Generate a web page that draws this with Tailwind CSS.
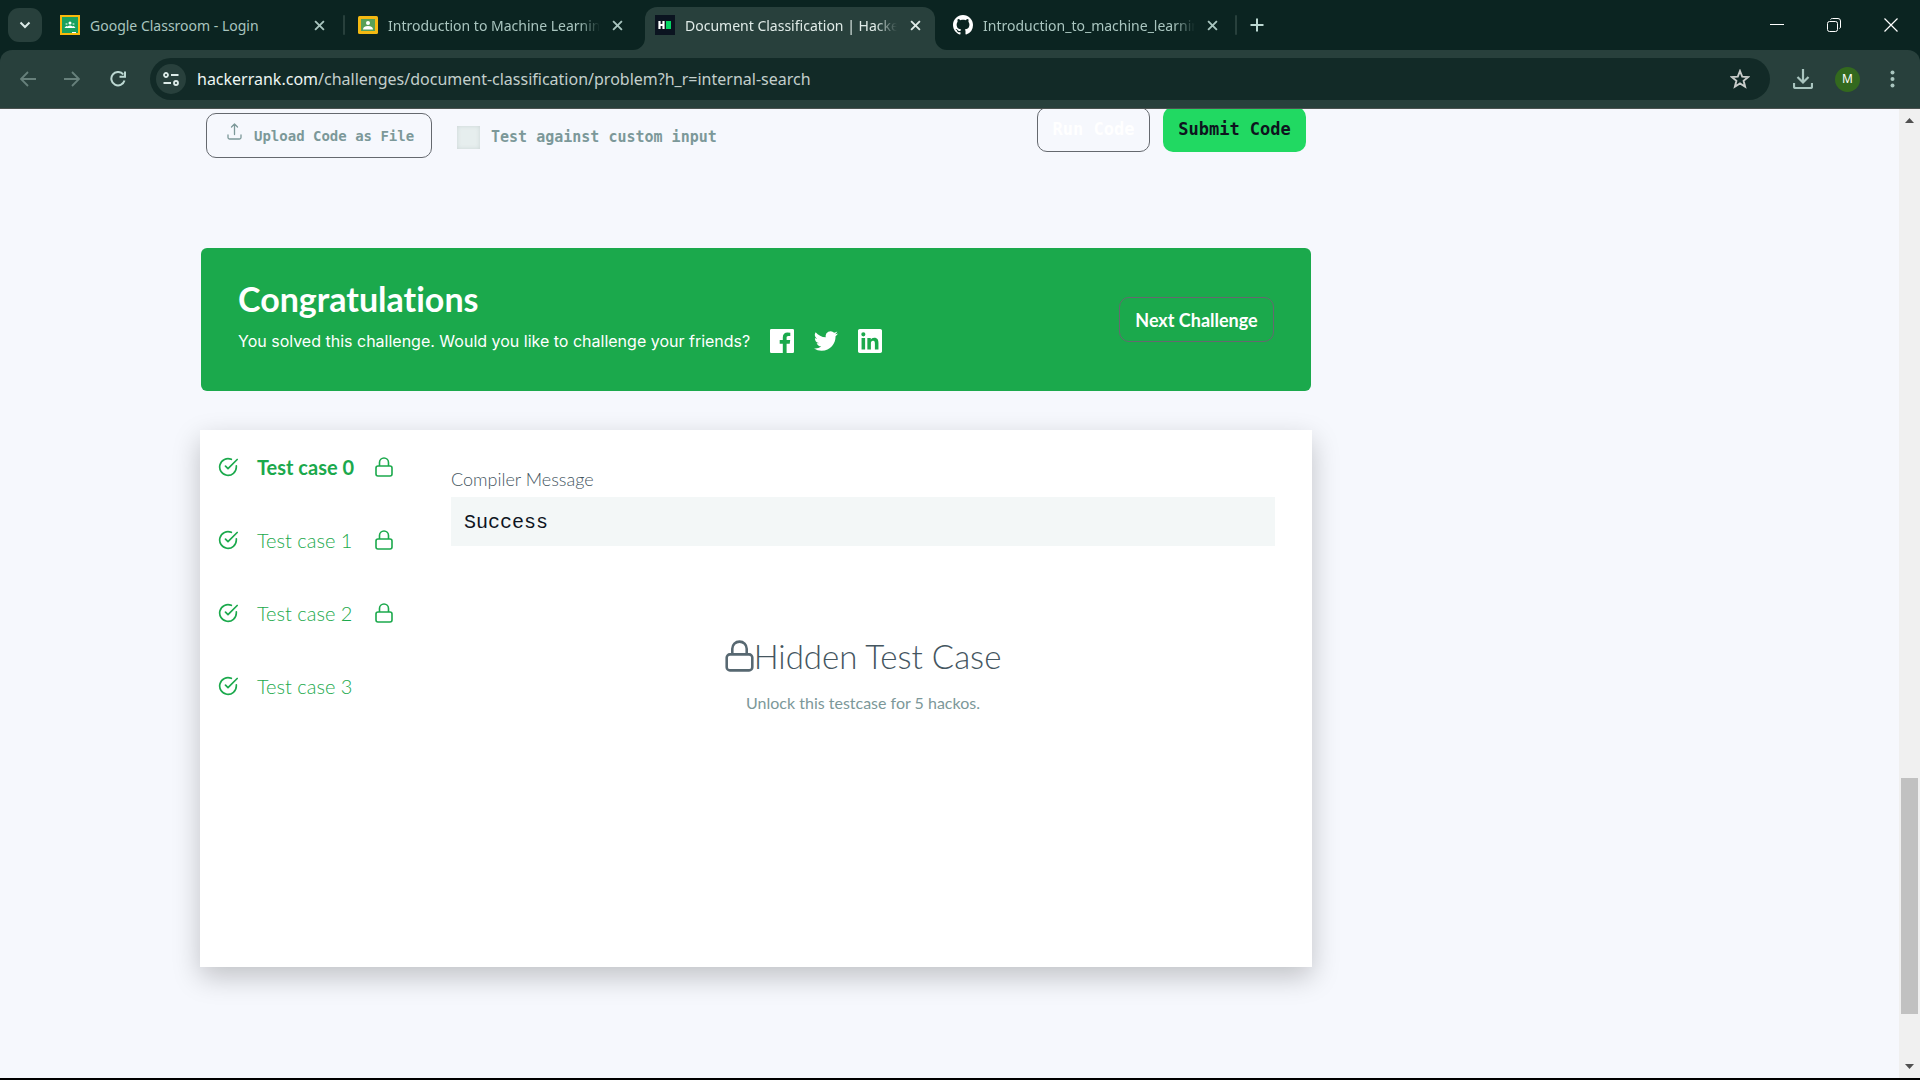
<!DOCTYPE html>
<html lang="en">
<head>
<meta charset="utf-8">
<title>Document Classification | HackerRank</title>
<script src="https://cdn.jsdelivr.net/npm/@tailwindcss/browser@4"></script>
</head>
<body class="flex min-h-screen flex-col overflow-hidden border-b-2 border-black bg-[#f6f8fd] font-['Lato',sans-serif]">
<svg class="hidden" aria-hidden="true">
  <symbol id="x" viewBox="0 0 10 10"><path d="M1 1l8 8M9 1l-8 8" stroke="currentColor" stroke-width="1.7" fill="none"/></symbol>
  <symbol id="check" viewBox="0 0 24 24"><path d="M22 10.500v1.500a10 10 0 1 1-6-9.200M23 3L12 14l-3-3" stroke="currentColor" stroke-width="2" stroke-linecap="round" stroke-linejoin="round" fill="none"/></symbol>
  <symbol id="lock" viewBox="0 0 18 20"><rect x="1" y="9" width="16" height="10" rx="2" stroke="currentColor" stroke-width="1.600" fill="none"/><path d="M4.500 9V5.500a4.500 4.500 0 0 1 9 0V9" stroke="currentColor" stroke-width="1.600" fill="none"/></symbol>
</svg>

<header class="bg-[#0b2421] font-['Noto_Sans',sans-serif] text-[#a9c5bf]">
  <div class="flex h-[50px] items-end">
    <button aria-label="Search tabs" class="mb-2 ml-2 flex h-[34px] w-[34px] items-center justify-center rounded-[11px] bg-[#28403c] text-[#dcebe8]">
      <svg width="12" height="8" viewBox="0 0 12 8"><path d="M1.500 1.500L6 6l4.500-4.500" fill="none" stroke="currentColor" stroke-width="2"/></svg>
    </button>
    <nav class="ml-2 flex h-[43px] min-w-0" aria-label="Tabs">
      <div class="flex h-9 w-[298px] items-center pr-[23px] pl-[10px]">
        <svg class="shrink-0" width="20" height="20" viewBox="0 0 20 20"><rect width="20" height="20" fill="#f9b90b"/><rect x="2" y="2" width="16" height="16" fill="#1aa15f"/><circle cx="10" cy="8" r="1.500" fill="#fff"/><circle cx="6.500" cy="9" r="1.100" fill="#9bd8b9"/><circle cx="13.500" cy="9" r="1.100" fill="#9bd8b9"/><path d="M4.500 13q2-3 3-1.500 2.500-2 5 0 1-1.500 3 1.500z" fill="#fff"/><path d="M12 17h4v1h-4z" fill="#fff"/></svg>
        <a href="#" class="ml-[10px] w-[212px] overflow-hidden pt-px whitespace-nowrap text-sm">Google Classroom - Login</a>
        <button aria-label="Close tab" class="ml-auto shrink-0"><svg width="11" height="11"><use href="#x"/></svg></button>
      </div>
      <div class="relative flex h-9 w-[297px] items-center pr-[22px] pl-[10px]">
        <span class="absolute top-2 -left-[5px] h-5 w-[2px] rounded bg-[#28403c]"></span>
        <svg class="shrink-0" width="20" height="20" viewBox="0 0 20 20"><rect y="1" width="20" height="18" rx="1.500" fill="#f4b912"/><rect x="3" y="4" width="14" height="12" fill="#58a058"/><circle cx="10" cy="8" r="2" fill="#fff"/><path d="M5 14.500q0-3.500 5-3.500t5 3.500z" fill="#fff"/></svg>
        <a href="#" class="ml-[10px] w-[212px] overflow-hidden pt-px whitespace-nowrap text-sm [mask-image:linear-gradient(to_right,black_90%,transparent_100%)]">Introduction to Machine Learning</a>
        <button aria-label="Close tab" class="ml-auto shrink-0"><svg width="11" height="11"><use href="#x"/></svg></button>
      </div>
      <div class="relative flex w-[290px] items-start rounded-t-xl bg-[#28403c] pr-[14px] pl-[10px] text-[#dfeae7]">
        <svg class="absolute bottom-0 -left-3" width="12" height="12"><path d="M12 0v12H0A12 12 0 0 0 12 0" fill="#28403c"/></svg>
        <svg class="absolute -right-3 bottom-0" width="12" height="12"><path d="M0 0v12h12A12 12 0 0 1 0 0" fill="#28403c"/></svg>
        <div class="flex h-9 w-full items-center">
          <svg class="shrink-0" width="20" height="20" viewBox="0 0 20 20"><rect width="20" height="20" fill="#0b1420"/><path d="M4.500 6v8M8.500 6v8M4 10h5" stroke="#fff" stroke-width="2.200"/><rect x="11" y="6" width="5" height="8" fill="#05d463"/></svg>
          <a href="#" class="ml-[10px] w-[212px] overflow-hidden pt-px whitespace-nowrap text-sm [mask-image:linear-gradient(to_right,black_90%,transparent_100%)]">Document Classification | HackerRank</a>
          <button aria-label="Close tab" class="ml-auto shrink-0"><svg width="11" height="11"><use href="#x"/></svg></button>
        </div>
      </div>
      <div class="ml-2 flex h-9 w-[297px] items-center pr-[22px] pl-[10px]">
        <svg class="shrink-0" width="20" height="20" viewBox="0 0 16 16" fill="#fff"><path d="M8 0C3.580 0 0 3.580 0 8c0 3.540 2.290 6.530 5.470 7.590.4.070.55-.17.55-.38 0-.19-.01-.82-.01-1.490-2.010.37-2.530-.49-2.690-.94-.09-.23-.48-.94-.82-1.130-.28-.15-.68-.52-.01-.53.630-.01 1.080.58 1.230.82.720 1.210 1.870.87 2.330.66.070-.52.280-.87.510-1.070-1.780-.2-3.640-.89-3.640-3.950 0-.87.310-1.590.82-2.150-.08-.2-.36-1.020.08-2.120 0 0 .67-.21 2.200.82.640-.18 1.320-.27 2-.27s1.360.09 2 .27c1.530-1.040 2.200-.82 2.200-.82.440 1.100.16 1.920.08 2.120.510.560.82 1.270.82 2.150 0 3.070-1.870 3.750-3.650 3.950.29.25.54.73.54 1.480 0 1.070-.01 1.930-.01 2.200 0 .21.15.46.55.38A8.010 8.010 0 0 0 16 8c0-4.420-3.580-8-8-8z"/></svg>
        <a href="#" class="ml-[10px] w-[212px] overflow-hidden pt-px whitespace-nowrap text-sm [mask-image:linear-gradient(to_right,black_90%,transparent_100%)]">Introduction_to_machine_learning</a>
        <button aria-label="Close tab" class="ml-auto shrink-0"><svg width="11" height="11"><use href="#x"/></svg></button>
      </div>
    </nav>
    <div class="mb-[15px] -ml-[5px] h-5 w-[2px] shrink-0 rounded bg-[#28403c]"></div>
    <button aria-label="New tab" class="mb-[18px] ml-[13px] text-[#bcd8d2]"><svg width="14" height="14" viewBox="0 0 14 14"><path d="M7 0.500v13M0.500 7h13" stroke="currentColor" stroke-width="2"/></svg></button>
    <div class="mr-[22px] mb-[18px] ml-auto flex items-center gap-[43px] text-white">
      <button aria-label="Minimize"><svg width="14" height="14"><path d="M0 6.500h14" stroke="currentColor"/></svg></button>
      <button aria-label="Restore"><svg width="14" height="14" viewBox="0 0 14 14" fill="none" stroke="currentColor"><rect x="0.500" y="3.500" width="10" height="10" rx="2"/><path d="M3.500 1.500Q4 .5 5.500.5H11A2.500 2.500 0 0 1 13.500 3v6q0 1-1 1.500"/></svg></button>
      <button aria-label="Close"><svg width="14" height="14" viewBox="0 0 14 14"><path d="M.5.5l13 13M13.500.5l-13 13" stroke="currentColor" stroke-width="1.200"/></svg></button>
    </div>
  </div>
  <div class="flex h-[59px] items-center rounded-t-xl border-b border-[#4b5250] bg-[#28403c] pr-[25px] pl-5">
    <button aria-label="Back" class="text-[#67807b]"><svg width="16" height="16" viewBox="0 0 16 16" fill="none" stroke="currentColor" stroke-width="1.800"><path d="M16 8H1.500M8 1L1 8l7 7"/></svg></button>
    <button aria-label="Forward" class="ml-7 text-[#67807b]"><svg width="16" height="16" viewBox="0 0 16 16" fill="none" stroke="currentColor" stroke-width="1.800"><path d="M0 8h14.500M8 1l7 7-7 7"/></svg></button>
    <button aria-label="Reload" class="ml-[30px] text-[#bcd8d2]"><svg width="16" height="16" viewBox="0 0 16 16" fill="none" stroke="currentColor" stroke-width="2"><path d="M14.500 9.500A6.700 6.700 0 1 1 13.300 3.500M15 .5v5.300H9.500"/></svg></button>
    <div class="ml-6 flex h-[42px] min-w-0 flex-1 items-center rounded-full bg-[#122a27] pr-5 pl-[6px]">
      <button aria-label="View site information" class="flex h-[30px] w-[30px] shrink-0 items-center justify-center rounded-full bg-[#28403c] text-[#dcebe8]"><svg width="16" height="14" viewBox="0 0 16 14" fill="none" stroke="currentColor" stroke-width="1.800"><circle cx="3" cy="3" r="2"/><path d="M8 3h7.500M.5 11H8"/><circle cx="13" cy="11" r="2"/></svg></button>
      <input aria-label="Address" class="sr-only" value="hackerrank.com/challenges/document-classification/problem?h_r=internal-search">
      <div class="ml-[11px] flex-1 truncate text-base text-[#c3cfcc]"><span class="text-[#edf6f3]">hackerrank.com</span>/challenges/document-classification/problem?h_r=internal-search</div>
      <button aria-label="Bookmark this tab" class="text-[#c8ccca]"><svg width="20" height="20" viewBox="0 0 20 20"><path d="M10 2l2.200 5.600 6 .4-4.600 3.800 1.500 5.900L10 14.400l-5.100 3.300 1.500-5.900L1.800 8l6-.4z" fill="none" stroke="currentColor" stroke-width="1.900"/></svg></button>
    </div>
    <button aria-label="Downloads" class="ml-[23px] text-[#a9c5bf]"><svg width="20" height="20" viewBox="0 0 20 20" fill="none" stroke="currentColor" stroke-width="2.200"><path d="M10 0v13M4.500 8l5.500 5.500L15.500 8M1 14v3.500q0 1.500 1.500 1.500h15q1.500 0 1.500-1.500V14"/></svg></button>
    <button aria-label="Profile" class="ml-[22px] h-[25px] w-[25px] rounded-full bg-[#33691e] text-xs text-white">M</button>
    <button aria-label="Menu" class="ml-[30px] text-[#a9c5bf]"><svg width="5" height="18" fill="currentColor"><circle cx="2.500" cy="2.500" r="2"/><circle cx="2.500" cy="9" r="2"/><circle cx="2.500" cy="15.500" r="2"/></svg></button>
  </div>
</header>

<div class="flex flex-1">
  <main class="min-w-0 flex-1 overflow-hidden pl-[200px]">
    <div class="w-full max-w-[1112px]">
      <section class="-mt-0.5 flex items-start justify-between px-[6px] font-['DejaVu_Sans_Mono',monospace] font-bold">
        <div class="mt-[6px] flex items-center">
          <button class="flex h-[45px] w-[226px] items-center gap-3 rounded-[10px] border border-[#65696f] pl-5 text-sm whitespace-nowrap text-[#7c9899]">
            <svg class="mb-2" width="15" height="17" viewBox="0 0 15 17" fill="none" stroke="currentColor" stroke-width="1.300" stroke-linecap="round" stroke-linejoin="round"><path d="M7.500 11.500V1M4.500 4l3-3 3 3M1 12v2.500q0 1.500 1.500 1.500h10q1.500 0 1.500-1.500V12"/></svg>
            Upload Code as File</button>
          <div class="flex items-center pt-1">
            <input type="checkbox" id="custom" class="ml-[25px] h-[23px] w-[23px] appearance-none bg-[#e6eeee] shadow-[inset_0_0_4px_#cbd5d5]">
            <label for="custom" class="ml-[11px] text-[15px] text-[#7c9899]">Test against custom input</label>
          </div>
        </div>
        <div class="flex gap-[13px] text-[17px]">
          <button class="h-[45px] w-[113px] rounded-[10px] border border-[#65696f] text-white">Run Code</button>
          <button class="h-[45px] w-[143px] rounded-[10px] bg-[#21d962] text-[#0e141e]">Submit Code</button>
        </div>
      </section>

      <section class="mx-px mt-[90px] flex h-[143px] items-center justify-between rounded-md bg-[#1ba94c] px-[37px] text-white">
        <div class="pb-2">
          <h1 class="text-[34px] leading-10 font-bold [font-variant-ligatures:none]">Congratulations</h1>
          <div class="mt-[10px] flex items-center">
            <p class="w-[516px] font-['Inter',sans-serif] text-base whitespace-nowrap">You solved this challenge. Would you like to challenge your friends?</p>
            <div class="ml-4 flex items-center gap-5">
              <a href="#" aria-label="Share on Facebook"><svg width="24" height="24" viewBox="0 0 24 24" fill="currentColor"><path d="M1.300 0h21.400Q24 0 24 1.300v21.400q0 1.300-1.300 1.300h-6.100v-9.300h3.100l.5-3.600h-3.600V8.800c0-1 .3-1.800 1.800-1.800h1.900V3.700q-1-.1-2.800-.1c-2.800 0-4.700 1.700-4.700 4.800v2.700H9.700v3.600h3.100V24H1.300Q0 24 0 22.700V1.300Q0 0 1.300 0z"/></svg></a>
              <a href="#" aria-label="Share on Twitter"><svg width="24" height="24" viewBox="0 0 24 24" fill="currentColor"><path d="M23.950 4.570a10 10 0 0 1-2.820.77 4.960 4.960 0 0 0 2.160-2.720c-.95.550-2 .950-3.130 1.180a4.920 4.920 0 0 0-8.380 4.480C7.690 8.100 4.070 6.130 1.640 3.160a4.920 4.920 0 0 0 1.520 6.570 4.900 4.900 0 0 1-2.230-.61v.06a4.920 4.920 0 0 0 3.950 4.830 5 5 0 0 1-2.210.08 4.940 4.940 0 0 0 4.600 3.420A9.870 9.870 0 0 1 0 19.540a14 14 0 0 0 7.550 2.210c9.050 0 14-7.500 14-13.980 0-.21 0-.42-.02-.63a9.940 9.940 0 0 0 2.460-2.550z"/></svg></a>
              <a href="#" aria-label="Share on LinkedIn"><svg width="24" height="24" viewBox="0 0 24 24" fill="currentColor"><path d="M20.450 20.450h-3.560v-5.570c0-1.330-.02-3.040-1.850-3.040-1.850 0-2.140 1.450-2.140 2.940v5.670H9.350V9h3.410v1.560h.05c.48-.9 1.640-1.850 3.370-1.850 3.600 0 4.270 2.370 4.270 5.460zM5.340 7.430a2.060 2.060 0 1 1 0-4.130 2.060 2.060 0 0 1 0 4.130zm1.780 13.020H3.560V9h3.560zM22.220 0H1.770C.79 0 0 .77 0 1.730v20.540C0 23.230.79 24 1.770 24h20.450c.98 0 1.780-.77 1.780-1.730V1.730C24 .77 23.200 0 22.220 0z"/></svg></a>
            </div>
          </div>
        </div>
        <button class="h-[45px] w-[155px] rounded-[10px] border border-[#65696f] text-lg font-bold">Next Challenge</button>
      </section>

      <section class="mt-[39px] flex min-h-[537px] bg-white shadow-[0_10px_26px_rgba(0,0,0,0.22)]">
        <ul class="w-[251px] shrink-0 pl-[18px] text-xl font-light text-[#1ba94c]">
          <li class="flex h-[73px] items-center"><svg width="20" height="20"><use href="#check"/></svg><button class="ml-[19px] w-[108px] text-left font-bold">Test case 0</button><svg class="ml-[10px]" width="18" height="20"><use href="#lock"/></svg></li>
          <li class="flex h-[73px] items-center"><svg width="20" height="20"><use href="#check"/></svg><button class="ml-[19px] w-[108px] text-left">Test case 1</button><svg class="ml-[10px]" width="18" height="20"><use href="#lock"/></svg></li>
          <li class="flex h-[73px] items-center"><svg width="20" height="20"><use href="#check"/></svg><button class="ml-[19px] w-[108px] text-left">Test case 2</button><svg class="ml-[10px]" width="18" height="20"><use href="#lock"/></svg></li>
          <li class="flex h-[73px] items-center"><svg width="20" height="20"><use href="#check"/></svg><button class="ml-[19px] w-[108px] text-left">Test case 3</button></li>
        </ul>
        <div class="min-w-0 flex-1 pt-[35px] pr-[37px]">
          <h2 class="text-lg leading-7 font-light text-[#45565f]">Compiler Message</h2>
          <pre class="mt-1 h-[49px] bg-[#f3f7f7] px-[13px] font-['Liberation_Mono',monospace] text-xl leading-[52px] text-[#0e141e]">Success</pre>
          <div class="mt-[86px] flex items-center justify-center text-[#576871]">
            <svg width="29" height="32" viewBox="0 0 18 20"><use href="#lock"/></svg>
            <h3 class="text-[33px] leading-[48px] font-light text-[#45565f]">Hidden Test Case</h3>
          </div>
          <p class="mt-[11px] text-center text-base leading-6 text-[#7c9899]">Unlock this testcase for 5 hackos.</p>
        </div>
      </section>
    </div>
  </main>
  <aside class="flex w-[21px] flex-col items-center bg-[#f0f0f0] py-[9px] text-[#505050]" aria-hidden="true">
    <svg width="9" height="5"><path d="M4.500 0L9 5H0z" fill="currentColor"/></svg>
    <div class="mt-auto mb-[50px] h-[236px] w-[17px] bg-[#c1c1c1]"></div>
    <svg width="9" height="5"><path d="M0 0h9L4.500 5z" fill="currentColor"/></svg>
  </aside>
</div>
</body>
</html>
